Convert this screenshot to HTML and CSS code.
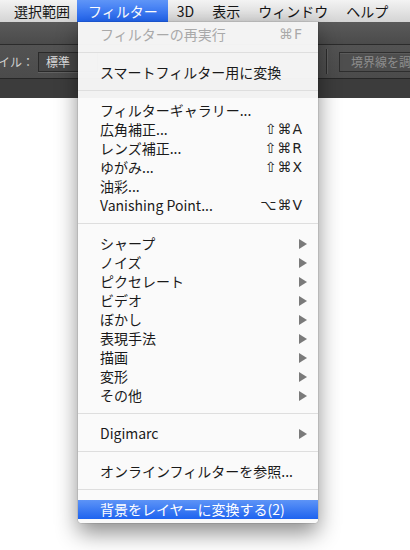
FILE: index.html
```html
<!DOCTYPE html>
<html lang="ja">
<head>
<meta charset="utf-8">
<link rel="stylesheet" href="styles.css">
</head>
<body>
<div class="menubar">
  <span class="mb-item">選択範囲</span>
  <span class="mb-item active">フィルター</span>
  <span class="mb-item">3D</span>
  <span class="mb-item">表示</span>
  <span class="mb-item">ウィンドウ</span>
  <span class="mb-item">ヘルプ</span>
</div>
<div class="toolbar">
  <div class="band band-top"></div>
  <div class="band band-main">
    <span class="tb-label">イル：</span>
    <span class="tb-field">標準</span>
    <span class="tb-spacer"></span>
    <span class="tb-sep"></span>
    <span class="tb-button">境界線を調整...</span>
  </div>
  <div class="band band-bottom"></div>
</div>
<div class="canvas"></div>

<div class="menu">
  <div class="item disabled"><span class="label">フィルターの再実行</span><span class="key">⌘F</span></div>
  <div class="sep"></div>
  <div class="item"><span class="label">スマートフィルター用に変換</span></div>
  <div class="sep"></div>
  <div class="item"><span class="label">フィルターギャラリー...</span></div>
  <div class="item"><span class="label">広角補正...</span><span class="key">⇧⌘A</span></div>
  <div class="item"><span class="label">レンズ補正...</span><span class="key">⇧⌘R</span></div>
  <div class="item"><span class="label">ゆがみ...</span><span class="key">⇧⌘X</span></div>
  <div class="item"><span class="label">油彩...</span></div>
  <div class="item"><span class="label">Vanishing Point...</span><span class="key">⌥⌘V</span></div>
  <div class="sep"></div>
  <div class="item sub"><span class="label">シャープ</span><span class="arrow"></span></div>
  <div class="item sub"><span class="label">ノイズ</span><span class="arrow"></span></div>
  <div class="item sub"><span class="label">ピクセレート</span><span class="arrow"></span></div>
  <div class="item sub"><span class="label">ビデオ</span><span class="arrow"></span></div>
  <div class="item sub"><span class="label">ぼかし</span><span class="arrow"></span></div>
  <div class="item sub"><span class="label">表現手法</span><span class="arrow"></span></div>
  <div class="item sub"><span class="label">描画</span><span class="arrow"></span></div>
  <div class="item sub"><span class="label">変形</span><span class="arrow"></span></div>
  <div class="item sub"><span class="label">その他</span><span class="arrow"></span></div>
  <div class="sep"></div>
  <div class="item sub"><span class="label">Digimarc</span><span class="arrow"></span></div>
  <div class="sep"></div>
  <div class="item"><span class="label">オンラインフィルターを参照...</span></div>
  <div class="sep"></div>
  <div class="item selected"><span class="label">背景をレイヤーに変換する(2)</span></div>
</div>
</body>
</html>
```

FILE: styles.css
```css
html, body {
  margin: 0;
  padding: 0;
  background: #ffffff;
}

body {
  position: relative;
  width: 410px;
  height: 550px;
  overflow: hidden;
  font-family: "Noto Sans CJK JP", "Noto Sans", "DejaVu Sans", sans-serif;
  color: #1a1a1a;
}

/* ---------- menu bar ---------- */
.menubar {
  display: flex;
  height: 22px;
  padding-left: 5px;
  background: linear-gradient(#f3f3f3, #d4d4d4);
  font-size: 14px;
  line-height: 22px;
}

.mb-item {
  padding: 0 9px;
  color: #151515;
  white-space: nowrap;
}

.mb-item.active {
  margin-left: -2px;
  padding: 0 10px 0 11px;
  color: #ffffff;
  background: linear-gradient(#5f95f7, #1f62ee);
}

/* ---------- toolbar ---------- */
.toolbar {
  display: flex;
  flex-direction: column;
}

.band-top {
  height: 22px;
  background: linear-gradient(#5a5a5a, #4b4b4b);
  border-bottom: 1px solid #2b2b2b;
}

.band-main {
  display: flex;
  align-items: center;
  height: 33px;
  background: linear-gradient(#535353, #4b4b4b);
  border-bottom: 1px solid #262626;
  font-size: 12px;
  overflow: hidden;
}

.tb-label {
  margin-left: -2px;
  color: #cfcfcf;
  white-space: nowrap;
}

.tb-field {
  box-sizing: border-box;
  width: 60px;
  height: 20px;
  margin-left: 4px;
  padding-left: 7px;
  line-height: 18px;
  color: #dcdcdc;
  background: #474747;
  border: 1px solid #2a2a2a;
  box-shadow: 0 1px 0 rgba(255, 255, 255, 0.12);
}

.tb-spacer {
  flex: 1;
}

.tb-sep {
  width: 1px;
  height: 25px;
  margin-right: 12px;
  background: #2c2c2c;
  box-shadow: 1px 0 0 rgba(255, 255, 255, 0.1);
}

.tb-button {
  box-sizing: border-box;
  flex: none;
  width: 84px;
  height: 20px;
  margin-right: -13px;
  padding-left: 11px;
  line-height: 18px;
  color: #8d8d8d;
  white-space: nowrap;
  background: #4e4e4e;
  border: 1px solid #2e2e2e;
  box-shadow: inset 0 1px 0 rgba(255, 255, 255, 0.08);
}

.band-bottom {
  height: 19px;
  background: #3c3c3c;
}

.canvas {
  height: 452px;
  background: #ffffff;
}

/* ---------- dropdown menu ---------- */
.menu {
  position: absolute;
  top: 22px;
  left: 78px;
  width: 240px;
  padding: 3px 0 4px;
  background: rgba(250, 250, 250, 0.96);
  border-radius: 0 0 4px 4px;
  box-shadow: 0 0 0 1px rgba(0, 0, 0, 0.08), 0 10px 22px rgba(0, 0, 0, 0.45);
  font-size: 14px;
}

.item {
  display: flex;
  align-items: center;
  height: 19px;
  padding: 0 15px 0 22px;
  line-height: 19px;
  color: #1a1a1a;
  white-space: nowrap;
}

.item .label {
  flex: 1;
}

.item .key {
  font-family: "DejaVu Sans", "Noto Sans CJK JP", sans-serif;
  font-size: 14px;
  letter-spacing: 1px;
  color: #222;
}

.item.disabled .label,
.item.disabled .key {
  color: #a9a9a9;
}

.item.sub {
  padding-right: 11px;
}

.arrow {
  width: 0;
  height: 0;
  border-left: 8px solid #7a7a7a;
  border-top: 5px solid transparent;
  border-bottom: 5px solid transparent;
}

.item.selected {
  color: #ffffff;
  background: linear-gradient(#5d94f7, #1e63ef);
}

.sep {
  height: 1px;
  margin: 8px 0 10px;
  background: #dedede;
}
```
